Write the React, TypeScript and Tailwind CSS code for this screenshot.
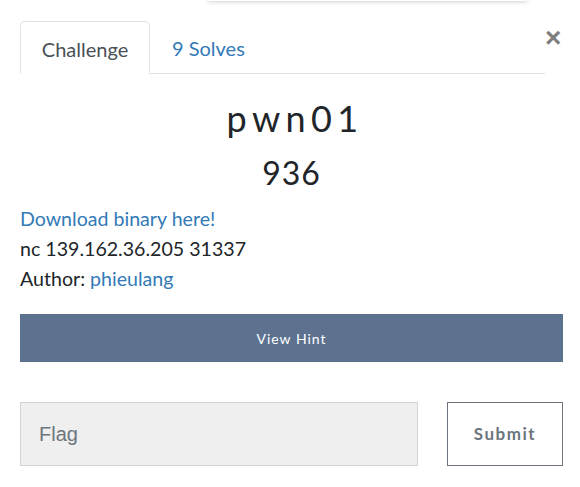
export default function App() {
    return (
        <div className="relative w-[580px] h-[487px] bg-white overflow-hidden font-['Lato',sans-serif] text-[#212529]">
            {/* edge of something sitting above the modal */}
            <div className="absolute left-[208px] top-[-20px] w-[319px] h-[21px] bg-white shadow-[0_1px_4px_rgba(0,0,0,0.18)]" />

            <div className="pl-[20px] pr-[17px] pt-[21px]">
                <div className="flex items-start">
                    <div className="flex w-[525px] h-[53px] border-b border-[#dee2e6]">
                        <div className="w-[130px] h-[53px] pt-[2px] border border-[#dee2e6] border-b-white rounded-t-[5px] bg-white flex items-center justify-center text-[20px] text-[#495057]">
                            Challenge
                        </div>
                        <div className="px-[22px] h-[52px] pt-[2px] flex items-center text-[20px] text-[#337ab7]">
                            9 Solves
                        </div>
                    </div>
                    <button className="mt-[3px] w-[16px] text-[28px] leading-none font-bold text-[#7d7d7d] font-['Liberation_Sans',sans-serif]">
                        ×
                    </button>
                </div>

                <h3 className="mt-[24px] text-center text-[36px] leading-[40px] tracking-[0.15em] pl-[0.2em]">pwn01</h3>
                <h4 className="mt-[15px] text-center text-[32px] leading-[40px] tracking-[1px]">936</h4>

                <div className="mt-[11px] text-[19.6px] leading-[30px]">
                    <div><a className="text-[#337ab7]">Download binary here!</a></div>
                    <div>nc 139.162.36.205 31337</div>
                    <div>Author: <span className="text-[#337ab7]">phieulang</span></div>
                </div>

                <button className="mt-[20px] w-[543px] h-[48px] bg-[#5c728f] text-white text-[14px] tracking-[1px] flex items-center justify-center">
                    View Hint
                </button>

                <div className="mt-[40px] flex">
                    <div className="w-[398px] h-[64px] bg-[#efefef] border border-[#ced4da] pl-[18px] flex items-center text-[20px] text-[#6c757d] font-['Liberation_Sans',sans-serif]">
                        Flag
                    </div>
                    <button className="ml-[29px] w-[116px] h-[64px] border border-[#6c757d] text-[17px] font-bold tracking-[1.5px] text-[#6c757d] flex items-center justify-center">
                        Submit
                    </button>
                </div>
            </div>
        </div>
    )
}
